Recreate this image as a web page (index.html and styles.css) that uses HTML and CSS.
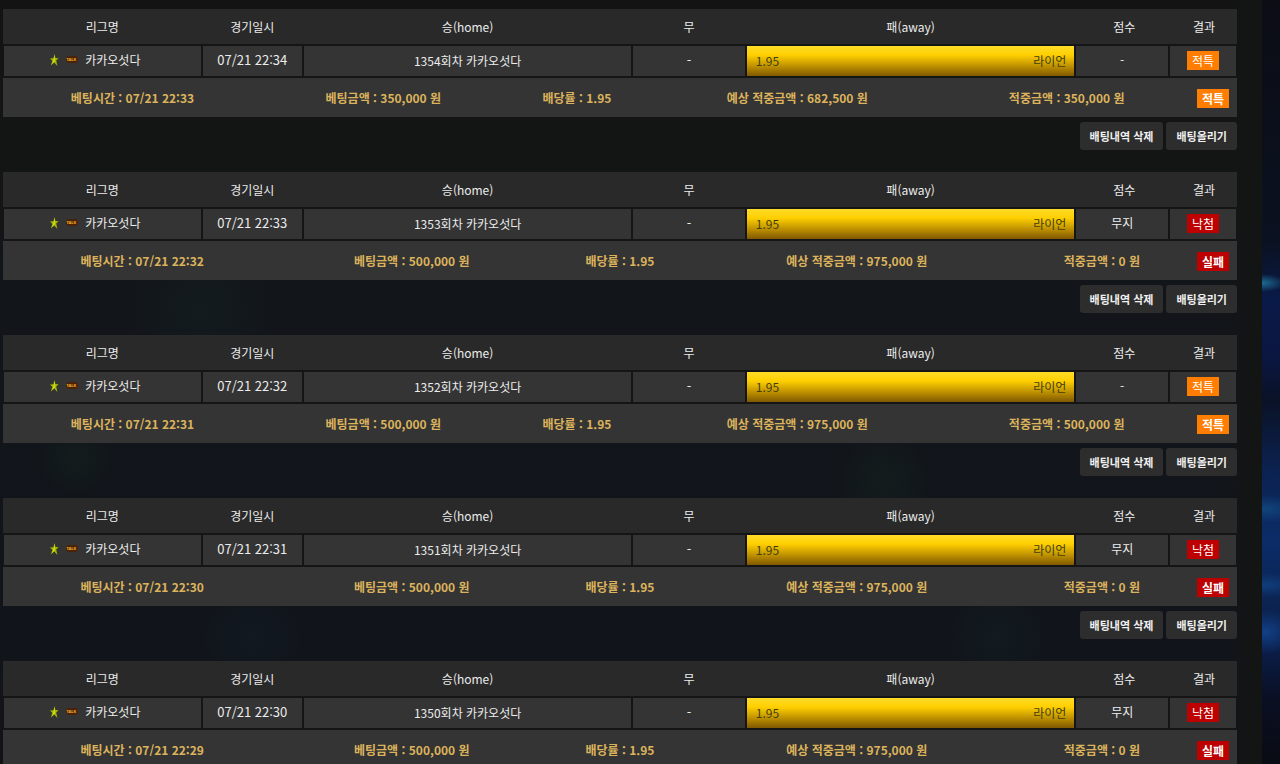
FILE: index.html
```html
<!DOCTYPE html>
<html lang="ko">
<head>
<meta charset="utf-8">
<title>배팅내역</title>
<link rel="stylesheet" href="styles.css">
</head>
<body>
<main class="panel" id="panel"></main>
<script src="app.js"></script>
</body>
</html>
```
FILE: styles.css
```css
* { box-sizing: border-box; }

body {
  margin: 0;
  height: 100vh;
  overflow: hidden;
  padding-right: 18px;
  font-family: "Noto Sans CJK KR", "Noto Sans", sans-serif;
  font-size: 13px;
  line-height: 20px;
  color: #ececec;
  background:
    radial-gradient(ellipse 24px 9px at calc(100% - 18px) 283px, #1c6c92, transparent),
    radial-gradient(ellipse 36px 14px at calc(100% - 14px) 509px, #11447c, transparent),
    radial-gradient(ellipse 36px 12px at calc(100% - 14px) 585px, #103e7c, transparent),
    radial-gradient(ellipse 30px 22px at calc(100% - 14px) 632px, #124086, transparent),
    linear-gradient(#0c0d15 0, #0a1120 240px, #0a1a48 300px, #0b1640 360px, #0a1226 400px, #0b2250 470px, #0b2c68 540px, #0b2350 610px, #0b1d48 650px, #0a0f22 700px, #090b14 764px);
}

.panel {
  min-height: 100vh;
  padding: 9px 25px 0 3px;
  background:
    radial-gradient(circle at 6% 458px, rgba(22, 50, 36, .25), transparent 40px),
    radial-gradient(circle at 70% 480px, rgba(22, 50, 36, .25), transparent 50px),
    radial-gradient(circle at 16% 310px, rgba(22, 50, 46, .2), transparent 80px),
    radial-gradient(circle at 79% 638px, rgba(22, 50, 50, .2), transparent 50px),
    radial-gradient(circle at 20% 640px, rgba(20, 40, 60, .2), transparent 50px),
    linear-gradient(90deg, transparent 97%, #131414 99%),
    linear-gradient(#131313, #131514 150px, #12151a 300px, #11151b 640px, #121316);
}

.bet { margin-bottom: 22px; }

.games, .summary {
  width: 100%;
  border-collapse: separate;
  border-spacing: 0;
}

.games { table-layout: fixed; }
.c-league { width: 16.1%; }
.c-date { width: 8.2%; }
.c-side { width: 26.7%; }
.c-draw { width: 9.2%; }
.c-score { width: 7.6%; }
.c-result { width: 5.5%; }

th, td { padding: 0; text-align: center; white-space: nowrap; }

.games th {
  height: 35px;
  font-size: 12px;
  font-weight: 400;
  background: #292929;
}
.games th.c-score { padding-left: 4px; }
.games th.c-result { padding-left: 2px; }

.games td {
  height: 34px;
  padding-bottom: 2px;
  border: solid #151515;
  border-width: 2px 1px;
  background: #343434;
}

.games .small { padding-bottom: 0; font-size: 12px; }
.games .score { font-size: 12px; }

.league {
  display: flex;
  align-items: center;
  justify-content: center;
  gap: 5px;
  padding-right: 14px;
  font-size: 12px;
}
.league svg { width: 30px; height: 14px; }
.talk { font: bold 4px "Noto Sans", sans-serif; fill: #f5b324; }

.games .picked {
  padding-bottom: 0;
  background: linear-gradient(#ffdc2a, #ffcf00 30%, #c29400 65%, #805800);
}
.pick {
  display: flex;
  justify-content: space-between;
  padding: 0 8px 0 9px;
  font-size: 12px;
  color: #41400e;
}

.summary td {
  height: 39px;
  background: #343434;
  color: #dcb35c;
  font-size: 12px;
  font-weight: 700;
}
.summary .state {
  width: 49px;
  padding-right: 8px;
  text-align: right;
}

.badge {
  display: inline-block;
  padding: 0 5px;
  font-size: 12px;
  line-height: 19px;
  color: #fff;
  vertical-align: middle;
}
.summary .badge, .games .badge { color: #fff; }
.special { background: #ff7d00; }
.lost { background: #bd0000; }

.actions {
  display: flex;
  justify-content: flex-end;
  gap: 3px;
  padding-top: 5px;
}
.actions button {
  height: 28px;
  padding: 0 10px;
  border: 0;
  border-radius: 3px;
  background: #2d2d2d;
  color: #f0f0f0;
  font: 700 11px "Noto Sans CJK KR", sans-serif;
}
```
FILE: app.js
```js
const bets = [
  { round: 1354, date: "22:34", placed: "22:33", stake: "350,000", expect: "682,500", win: "350,000", score: "-", special: true },
  { round: 1353, date: "22:33", placed: "22:32", stake: "500,000", expect: "975,000", win: "0", score: "무지" },
  { round: 1352, date: "22:32", placed: "22:31", stake: "500,000", expect: "975,000", win: "500,000", score: "-", special: true },
  { round: 1351, date: "22:31", placed: "22:30", stake: "500,000", expect: "975,000", win: "0", score: "무지" },
  { round: 1350, date: "22:30", placed: "22:29", stake: "500,000", expect: "975,000", win: "0", score: "무지", last: true }
];

const badge = (bet, lostText) =>
  `<span class="badge ${bet.special ? "special" : "lost"}">${bet.special ? "적특" : lostText}</span>`;

const leagueIcon = `
<svg viewBox="0 0 30 14" aria-hidden="true">
  <path d="M4.6 1 L5.4 5 L8.6 5.2 L6.2 7.6 L7.4 13 L4.3 9.6 L.8 12.4 L2.4 8 L0 5.6 L3.4 5.2Z" fill="#a3b800"/>
  <path d="M4.6 2 L5 8 L2 11 L3.3 7.6Z" fill="#dcdc20"/>
  <rect x="16" y="3" width="12" height="7" rx="3" fill="#4a220c"/>
  <text x="16.5" y="8" class="talk">TALK</text>
</svg>`;

document.getElementById("panel").innerHTML = bets.map(bet => `
<section class="bet">
  <table class="games">
    <thead><tr>
      <th class="c-league">리그명</th><th class="c-date">경기일시</th><th class="c-side">승(home)</th>
      <th class="c-draw">무</th><th class="c-side">패(away)</th><th class="c-score">점수</th><th class="c-result">결과</th>
    </tr></thead>
    <tbody><tr>
      <td><div class="league">${leagueIcon}<span>카카오섯다</span></div></td>
      <td>07/21 ${bet.date}</td>
      <td class="small">${bet.round}회차 카카오섯다</td>
      <td>-</td>
      <td class="picked"><div class="pick"><span>1.95</span><span>라이언</span></div></td>
      <td class="score">${bet.score}</td>
      <td>${badge(bet, "낙첨")}</td>
    </tr></tbody>
  </table>
  <table class="summary"><tbody><tr>
    <td>베팅시간 : 07/21 ${bet.placed}</td>
    <td>베팅금액 : ${bet.stake} 원</td>
    <td>배당률 : 1.95</td>
    <td>예상 적중금액 : ${bet.expect} 원</td>
    <td>적중금액 : ${bet.win} 원</td>
    <td class="state">${badge(bet, "실패")}</td>
  </tr></tbody></table>
  ${bet.last ? "" : `<div class="actions"><button type="button">배팅내역 삭제</button><button type="button">배팅올리기</button></div>`}
</section>`).join("");
```
